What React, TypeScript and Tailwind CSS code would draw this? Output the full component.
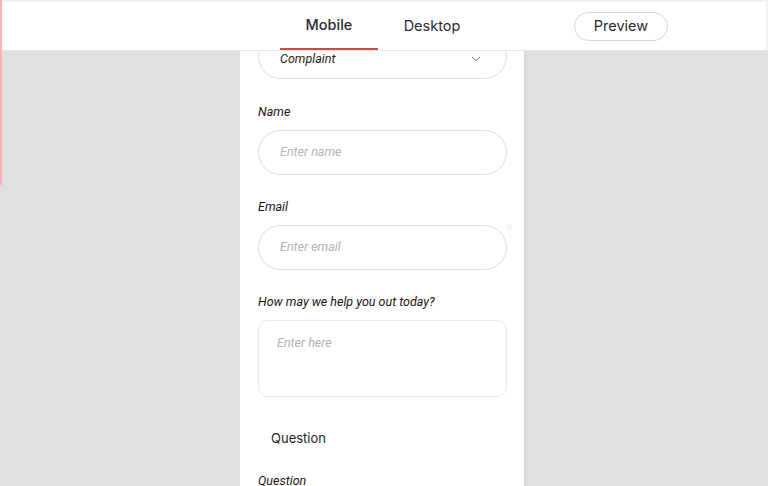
import { ChevronDown } from "lucide-react";

export default function App() {
  const label = "text-[12.5px] leading-[16px] italic text-[#1d1414] mb-[10px]";
  const input =
    "h-[45px] w-full rounded-full border border-[#e6dcdc] px-[21px] flex items-center text-[12.5px] italic text-[#b8b2b2]";

  return (
    <div className="relative h-[486px] w-[768px] overflow-hidden bg-[#e0e0e0] font-['Roboto',sans-serif]">
      {/* left accent */}
      <div className="absolute left-0 top-0 z-20 h-[185px] w-[2px] bg-[#ffb3b3]" />

      {/* header */}
      <div className="relative z-10 h-[51px] border-t-2 border-r-2 border-[#f2f2f2] bg-white border-b border-b-[#e4e4e4]">
        <div className="flex h-full items-center font-['Inter',sans-serif] text-[14.5px] text-[#2a2a33]">
          <div className="ml-[280px] flex h-full w-[98px] items-center justify-center border-b-2 border-[#cc4b46] font-medium">
            Mobile
          </div>
          <div className="ml-[5px] flex h-full w-[98px] items-center justify-center">
            Desktop
          </div>
          <button className="ml-[93px] h-[29px] w-[94px] rounded-full border border-[#d6d6d6] text-[14.5px] text-[#2a2a33]">
            Preview
          </button>
        </div>
      </div>

      {/* panel */}
      <div className="ml-[240px] h-[436px] w-[287px] overflow-hidden border-r-[3px] border-[#dcd8d8] bg-white -mt-px">
        <div className="relative -mt-[16px] px-[18px] pr-[17px]">
          <div className={input + " justify-between !text-[#2a2222]"}>
            <span className="pt-[6px]">Complaint</span>
            <ChevronDown size={14} strokeWidth={1.5} className="mr-[2px] mt-[4px] text-[#555]" />
          </div>

          <div className="mt-[25px]">
            <div className={label}>Name</div>
            <div className={input}>Enter name</div>
          </div>

          <div className="mt-[24px]">
            <div className={label}>Email</div>
            <div className={input}>Enter email</div>
          </div>
          <div className="absolute right-[12px] top-[190px] h-[7px] w-[6px] bg-[#fdf3f3]" />

          <div className="mt-[24px]">
            <div className={label}>How may we help you out today?</div>
            <div className="h-[77px] w-full rounded-[10px] border border-[#efe8e8] px-[18px] pt-[14px] text-[12.5px] italic leading-[16px] text-[#b8b2b2]">
              Enter here
            </div>
          </div>

          <div className="mt-[33px] pl-[13px] font-['Inter',sans-serif] text-[13px] leading-[16px] text-[#2a2222]">
            Question
          </div>

          <div className="mt-[27px] text-[12.5px] italic leading-[16px] text-[#1d1414]">Question</div>
        </div>
      </div>
    </div>
  );
}
